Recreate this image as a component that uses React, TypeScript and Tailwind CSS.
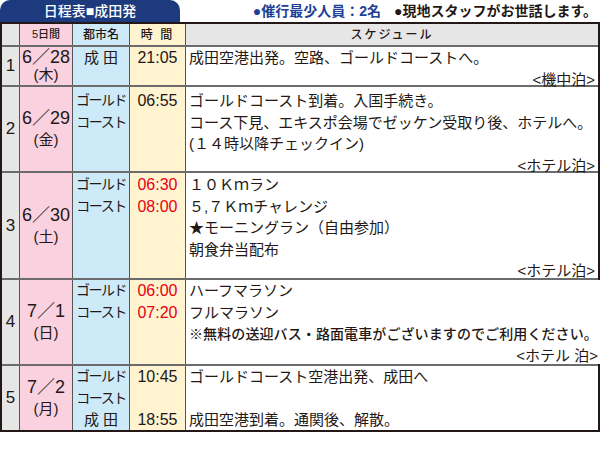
import React from "react";

type Row = {
  num: string;
  date: string;
  day: string;
  city: string[];
  times: string[];
  red?: boolean;
  lines: React.ReactNode[];
  note?: string;
  h: string;
  pt: string;
  dateLead: string;
};

const rows: Row[] = [
  {
    num: "1",
    date: "6／28",
    day: "(木)",
    city: ["成 田"],
    times: ["21:05"],
    lines: ["成田空港出発。空路、ゴールドコーストへ。"],
    note: "<機中泊>",
    h: "h-[40px] border-b-2",
    pt: "pt-0",
    dateLead: "leading-[18px]",
  },
  {
    num: "2",
    date: "6／29",
    day: "(金)",
    city: ["ゴールド", "コースト"],
    times: ["06:55"],
    lines: [
      "ゴールドコースト到着。入国手続き。",
      "コース下見、エキスポ会場でゼッケン受取り後、ホテルへ。",
      "(１４時以降チェックイン)",
    ],
    note: "<ホテル泊>",
    h: "h-[86px] border-b-2",
    pt: "pt-[3px]",
    dateLead: "leading-[21px]",
  },
  {
    num: "3",
    date: "6／30",
    day: "(土)",
    city: ["ゴールド", "コースト"],
    times: ["06:30", "08:00"],
    red: true,
    lines: ["１０Ｋｍラン", "５,７Ｋｍチャレンジ", "★モーニングラン（自由参加）", "朝食弁当配布"],
    note: "<ホテル泊>",
    h: "h-[107px] border-b-2",
    pt: "pt-[1px]",
    dateLead: "leading-[21px]",
  },
  {
    num: "4",
    date: "7／1",
    day: "(日)",
    city: ["ゴールド", "コースト"],
    times: ["06:00", "07:20"],
    red: true,
    lines: [
      "ハーフマラソン",
      "フルマラソン",
      <span className="text-[14px] font-medium tracking-[0.1px]">
        ※無料の送迎バス・路面電車がございますのでご利用ください。
      </span>,
    ],
    note: "<ホテル 泊>",
    h: "h-[86px] border-b-2",
    pt: "pt-0",
    dateLead: "leading-[21px]",
  },
  {
    num: "5",
    date: "7／2",
    day: "(月)",
    city: ["ゴールド", "コースト", "成 田"],
    times: ["10:45", "", "18:55"],
    lines: ["ゴールドコースト空港出発、成田へ", "", "成田空港到着。通関後、解散。"],
    h: "h-[64px]",
    pt: "pt-0",
    dateLead: "leading-[21px]",
  },
];

function DataRow({ r }: { r: Row }) {
  return (
    <div className={`flex ${r.h} border-[#6b6b6b]`}>
      <div className="w-[18px] shrink-0 bg-[#e6e6e6] border-r border-[#555] flex items-center justify-center text-[17px]">
        {r.num}
      </div>
      <div
        className={`w-[53px] shrink-0 bg-[#fad1de] border-r border-[#555] flex flex-col items-center justify-center ${r.dateLead}`}
      >
        <div className="text-[18px] whitespace-nowrap">{r.date}</div>
        <div className="text-[15px]">{r.day}</div>
      </div>
      <div
        className={`w-[57px] shrink-0 bg-[#cdeaf9] border-r border-[#555] flex flex-col items-center ${r.pt} leading-[21.5px]`}
      >
        {r.city.map((c, i) => (
          <div
            key={i}
            className={
              c === "成 田"
                ? "text-[15px] h-[21.5px] whitespace-pre"
                : "text-[14px] tracking-[-1.5px] h-[21.5px] whitespace-nowrap"
            }
          >
            {c}
          </div>
        ))}
      </div>
      <div
        className={`w-[56px] shrink-0 bg-[#fff3d0] border-r border-[#555] flex flex-col items-center ${r.pt} leading-[21.5px] text-[16px] ${
          r.red ? "text-[#e60012]" : ""
        }`}
      >
        {r.times.map((t, i) => (
          <div key={i} className="h-[21.5px]">
            {t}
          </div>
        ))}
      </div>
      <div
        className={`flex-1 bg-white flex flex-col justify-between ${r.pt} pl-[3px] pr-[3px] text-[15px] leading-[21.5px]`}
      >
        <div>
          {r.lines.map((l, i) => (
            <div key={i} className="h-[21.5px] whitespace-nowrap">
              {l}
            </div>
          ))}
        </div>
        {r.note && <div className="text-right whitespace-pre">{r.note}</div>}
      </div>
    </div>
  );
}

export default function App() {
  return (
    <div className="w-[600px] h-[454px] bg-white text-[#231815] font-['Liberation_Sans','Noto_Sans_CJK_JP',sans-serif]">
      <div className="flex h-[22px]">
        <div className="w-[180px] rounded-t-[10px] bg-[#1d3a7e] text-white text-[14px] font-medium flex items-center justify-center">
          日程表■成田発
        </div>
        <div className="flex-1 flex items-center justify-end gap-[13px] pr-[3px] text-[14px] font-bold">
          <span className="text-[#1e4196]">●催行最少人員：2名</span>
          <span>●現地スタッフがお世話します。</span>
        </div>
      </div>
      <div className="w-[600px] border-2 border-[#231815]">
        <div className="flex h-[23px] border-b-2 border-[#6b6b6b] text-[12px] font-medium">
          <div className="w-[18px] shrink-0 bg-[#e6e6e6] border-r border-[#555]" />
          <div className="w-[53px] shrink-0 bg-[#fad1de] border-r border-[#555] flex items-center justify-center text-[11px]">
            5日間
          </div>
          <div className="w-[57px] shrink-0 bg-[#cdeaf9] border-r border-[#555] flex items-center justify-center">
            都市名
          </div>
          <div className="w-[56px] shrink-0 bg-[#fff3d0] border-r border-[#555] flex items-center justify-center tracking-[2px]">
            時 間
          </div>
          <div className="flex-1 bg-[#e6e6e6] flex items-center justify-center tracking-[2px]">
            スケジュール
          </div>
        </div>
        {rows.map((r) => (
          <DataRow key={r.num} r={r} />
        ))}
      </div>
    </div>
  );
}
